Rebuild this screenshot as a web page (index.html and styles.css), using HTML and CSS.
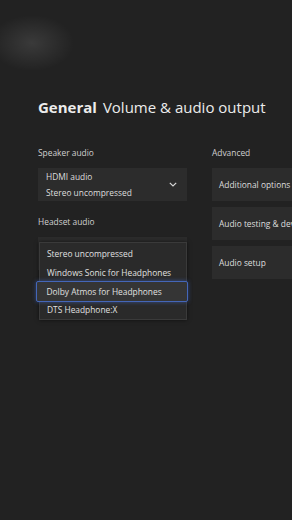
FILE: index.html
```html
<!DOCTYPE html>
<html>
<head>
<meta charset="utf-8">
<link rel="stylesheet" href="styles.css">
</head>
<body>
<div class="page">
  <h1 class="title"><span class="title-main">General</span><span class="title-sub">Volume &amp; audio output</span></h1>
  <div class="columns">
    <div class="col-left">
      <div class="label">Speaker audio</div>
      <div class="select">
        <div class="select-text">
          <div>HDMI audio</div>
          <div>Stereo uncompressed</div>
        </div>
        <svg class="chev" width="8" height="5" viewBox="0 0 8 5"><path d="M0.8 0.8 L4 4 L7.2 0.8" fill="none" stroke="#d8d8d8" stroke-width="1.2"/></svg>
      </div>
      <div class="label label-2">Headset audio</div>
      <div class="select select-headset">
        <div class="select-text">
          <div>Headset format</div>
          <div>Dolby Atmos for Headphones</div>
        </div>
        <div class="menu">
          <div class="menu-item">Stereo uncompressed</div>
          <div class="menu-item">Windows Sonic for Headphones</div>
          <div class="menu-item selected">Dolby Atmos for Headphones</div>
          <div class="menu-item">DTS Headphone:X</div>
        </div>
      </div>
    </div>
    <div class="col-right">
      <div class="label">Advanced</div>
      <div class="btn">Additional options</div>
      <div class="btn">Audio testing &amp; devices</div>
      <div class="btn">Audio setup</div>
    </div>
  </div>
</div>
</body>
</html>
```
FILE: styles.css
```css
html, body {
  margin: 0;
  padding: 0;
}
body {
  width: 292px;
  height: 520px;
  overflow: hidden;
  background: #222222;
  font-family: "Open Sans", "Noto Sans", sans-serif;
  color: #d6d6d6;
}
.page {
  height: 520px;
  padding: 96px 0 0 38px;
  box-sizing: border-box;
  background: radial-gradient(ellipse 42px 28px at 32px 43px, rgba(255,255,255,0.11), rgba(255,255,255,0) 100%);
}
.title {
  margin: 0;
  font-size: 15px;
  font-weight: 400;
  line-height: 22px;
  color: #ececec;
  white-space: nowrap;
}
.title-main {
  font-weight: 700;
  margin-right: 6px;
}
.columns {
  display: flex;
  gap: 25px;
  margin-top: 29px;
}
.col-left {
  width: 149px;
  flex: none;
}
.col-right {
  width: 140px;
  flex: none;
}
.label {
  font-size: 8.4px;
  line-height: 12px;
  color: #d0d0d0;
  margin-bottom: 9px;
}
.label-2 {
  margin-top: 15px;
}
.select {
  position: relative;
  height: 33px;
  background: #2c2c2c;
  display: flex;
  align-items: center;
  justify-content: space-between;
  padding: 0 9px 0 8px;
  box-sizing: border-box;
}
.select-text {
  font-size: 8.4px;
  line-height: 16px;
  color: #dedede;
  padding-top: 1px;
}
.chev {
  margin-right: 1px;
}
.select-headset .select-text {
  color: #555;
}
.menu {
  position: absolute;
  left: 1px;
  top: 5px;
  width: 148px;
  background: #2a2a2a;
  border: 1px solid #3a3a3a;
  box-shadow: 0 0 4px rgba(0,0,0,0.6);
  padding: 1px 0 0;
  box-sizing: border-box;
}
.menu-item {
  font-size: 8.4px;
  line-height: 19px;
  padding-left: 7px;
  color: #e0e0e0;
  white-space: nowrap;
}
.menu-item.selected {
  margin: -1.5px -2px -1.5px -4px;
  padding-left: 9.5px;
  line-height: 19px;
  background: #353535;
  border: 1.5px solid #4466b8;
  border-radius: 2px;
  box-shadow: 0 0 4px rgba(70,110,210,0.55);
}
.btn {
  height: 33px;
  background: #2c2c2c;
  margin-bottom: 6px;
  padding-left: 7px;
  font-size: 8.4px;
  line-height: 34px;
  color: #dedede;
  white-space: nowrap;
  overflow: hidden;
}
```
